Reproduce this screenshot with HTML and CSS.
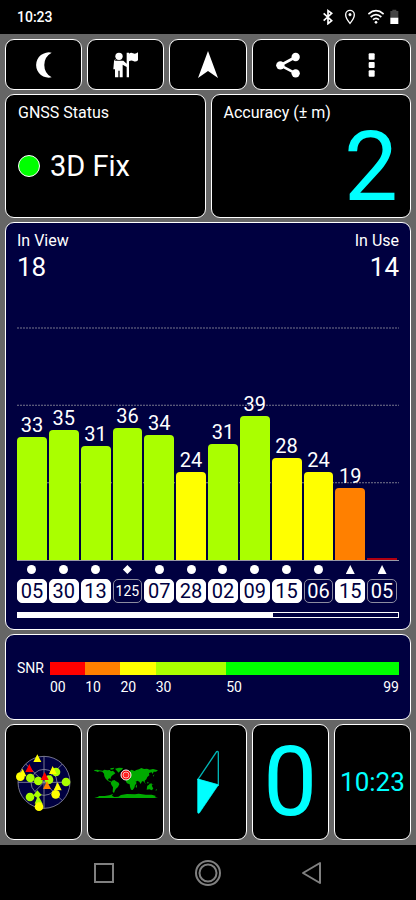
FILE: index.html
```html
<!DOCTYPE html>
<html lang="en">
<head>
<meta charset="utf-8">
<meta name="viewport" content="width=device-width, initial-scale=1">
<title>GNSS Status</title>
<link rel="stylesheet" href="styles.css">
</head>
<body>
<header class="statusbar">
  <span class="clock">10:23</span>
  <span class="sys-icons">
    <svg class="sys" viewBox="337 28 48 48" fill="none" stroke="#fff" stroke-width="5"><path d="M348 41l24 22-11 9V33l11 8-24 22"/></svg>
    <svg class="sys" viewBox="402 28 48 48" fill="none" stroke="#fff" stroke-width="4"><path d="M426 71C417 60 413 53 413 45a13 13 0 0 1 26 0c0 8-4 15-13 26z"/><circle cx="426" cy="45" r="4" fill="#fff" stroke-width="1"/></svg>
    <svg class="sys wifi" viewBox="480 28 48 48" fill="none" stroke="#fff" stroke-width="5"><path d="M481 43q23-20 46 0M488 52q16-14 32 0M495 60q9-8 18 0"/><circle cx="504" cy="68" r="4" fill="#fff" stroke="none"/></svg>
    <svg class="battery" viewBox="545 28 27 48"><path fill="#444" d="M546 34h6v-4h12v4h6v20h-24z"/><path fill="#fff" d="M546 54h24v19h-24z"/></svg>
  </span>
</header>

<main class="board">
  <nav class="row five">
    <button class="card tool" aria-label="Night mode"><svg viewBox="76 140 108 108" fill="#fff"><path d="M153 157a38 38 0 1 0 0 74 42 42 0 0 1 0-74z"/></svg></button>
    <button class="card tool" aria-label="Guide"><svg viewBox="324 140 108 108" fill="#fff"><circle cx="357" cy="168" r="11"/><path d="M344 181h26l10 9v-33h7v3q6-5 12-1 7 4 15-3v24q-7 6-14 2-6-4-13 1v48h-7v-31l-12-7v38h-9v-20h-4v20h-10v-24h-5l2-24q0-6 7-6z"/></svg></button>
    <button class="card tool" aria-label="Navigate"><svg viewBox="190 47 36 36" fill="#fff"><path d="M208 51l10 27-10-7-10 7z"/></svg></button>
    <button class="card tool" aria-label="Share"><svg viewBox="193 140 108 108" fill="#fff"><path d="M264 170l-46 25 46 24" fill="none" stroke="#fff" stroke-width="8"/><circle cx="264" cy="170" r="12.500"/><circle cx="218" cy="195" r="12.500"/><circle cx="264" cy="219" r="12.500"/></svg></button>
    <button class="card tool" aria-label="Menu"><svg viewBox="440 140 108 108" fill="#fff"><rect x="484" y="159" width="18" height="19" rx="3"/><rect x="484" y="185" width="18" height="18" rx="3"/><rect x="484" y="210" width="18" height="19" rx="3"/></svg></button>
  </nav>

  <section class="row two">
    <div class="card status">
      <h2 class="label">GNSS Status</h2>
      <p class="fix"><span class="dot"></span>3D Fix</p>
    </div>
    <div class="card status">
      <h2 class="label">Accuracy (± m)</h2>
      <p class="big accuracy">2</p>
    </div>
  </section>

  <section class="card blue signal">
    <div class="counts">
      <div><h2 class="label">In View</h2><p class="count">18</p></div>
      <div class="right"><h2 class="label">In Use</h2><p class="count">14</p></div>
    </div>
    <div class="plot">
      <svg class="gridlines" aria-hidden="true"><line x1="0" x2="100%" y1="0" y2="0"/><line x1="0" x2="100%" y1="33.3%" y2="33.3%"/><line x1="0" x2="100%" y1="66.7%" y2="66.7%"/></svg>
      <div class="col"><span>33</span><div class="bar lime" style="height:53%"></div></div>
      <div class="col"><span>35</span><div class="bar lime" style="height:56%"></div></div>
      <div class="col"><span>31</span><div class="bar lime" style="height:49%"></div></div>
      <div class="col"><span>36</span><div class="bar lime" style="height:57%"></div></div>
      <div class="col"><span>34</span><div class="bar lime" style="height:54%"></div></div>
      <div class="col"><span>24</span><div class="bar yellow" style="height:38%"></div></div>
      <div class="col"><span>31</span><div class="bar lime" style="height:50%"></div></div>
      <div class="col"><span>39</span><div class="bar lime" style="height:62%"></div></div>
      <div class="col"><span>28</span><div class="bar yellow" style="height:44%"></div></div>
      <div class="col"><span>24</span><div class="bar yellow" style="height:38%"></div></div>
      <div class="col"><span>19</span><div class="bar orange" style="height:31%"></div></div>
      <div class="col"><div class="bar none" style="height:1%"></div></div>
    </div>
    <div class="sats">
      <div class="sat"><i class="mark circle"></i><b class="used">05</b></div>
      <div class="sat"><i class="mark circle"></i><b class="used">30</b></div>
      <div class="sat"><i class="mark circle"></i><b class="used">13</b></div>
      <div class="sat"><i class="mark diamond"></i><b class="small">125</b></div>
      <div class="sat"><i class="mark circle"></i><b class="used">07</b></div>
      <div class="sat"><i class="mark circle"></i><b class="used">28</b></div>
      <div class="sat"><i class="mark circle"></i><b class="used">02</b></div>
      <div class="sat"><i class="mark circle"></i><b class="used">09</b></div>
      <div class="sat"><i class="mark circle"></i><b class="used">15</b></div>
      <div class="sat"><i class="mark circle"></i><b>06</b></div>
      <div class="sat"><i class="mark triangle"></i><b class="used">15</b></div>
      <div class="sat"><i class="mark triangle"></i><b>05</b></div>
    </div>
    <div class="pager"><div class="shown" style="width:67%"></div></div>
  </section>

  <section class="card blue snr">
    <span class="snr-label">SNR</span>
    <div class="scale">
      <div class="red"></div><div class="orange"></div><div class="yellow"></div><div class="lime"></div><div class="green"></div>
      <span>00</span><span>10</span><span>20</span><span>30</span><span class="ends"><span>50</span><span>99</span></span>
    </div>
  </section>

  <section class="row five">
    <button class="card tile" aria-label="Sky view">
      <svg class="sky" viewBox="41 96 180 180">
        <g stroke="#8c8ca0" stroke-width="2.500" fill="none"><circle cx="131" cy="187" r="78" fill="#000040"/><circle cx="131" cy="187" r="39"/><path d="M131 109v156M53 187h156M76 132l28 28M186 132l-28 28M104 214l54-54M158 214l28 28M104 160l54 54"/></g>
        <g fill="#af0"><circle cx="90" cy="174" r="13"/><circle cx="114" cy="183" r="13"/><circle cx="146" cy="179" r="13"/><circle cx="167" cy="156" r="13"/><circle cx="197" cy="186" r="13"/><circle cx="89" cy="231" r="13"/><path d="M111 211l13 14-8 6 11 20h-24l7-18-11-7z"/></g>
        <g fill="#ff0"><circle cx="60" cy="170" r="13"/><circle cx="166" cy="223" r="13"/><circle cx="116" cy="260" r="13"/><path d="M111 103l12 23H99zM67 146l11 23H55zM157 138l12 24h-23zM172 187l12 24h-24z"/></g>
        <path fill="red" d="M87 132l12 24H75zM133 156l12 24h-24z"/><path fill="#ff8000" d="M140 183l12 24h-24z"/>
      </svg>
    </button>
    <button class="card tile" aria-label="World map">
      <svg class="map" viewBox="26 135 198 102">
        <g fill="#0a0">
          <path d="M30 150l9-1 5 2 11 1 5-3 9 2 7-1 4 4 6-2 7 8-6 4-5 4-3 5 1 5-3-3-6 2 2 5 5 1 3 4-4-1-7-4-6-6-4-7-1-8-5-6-8-1-7 2-3-2-6-1z"/>
          <path d="M78 145l12-2-3 5-8 1zM92 146l12-3 12 1-3 5-5 3-5 6-5-5zM83 182l7-2 5 4 8 4 2 5-4 8-6 5-3 5-3 8-4-4 1-13-5-8-2-6z"/>
          <path d="M129 177l9-3 6 3 6 2 7 10-5 7-2 7-5 7-5-1-3-9-1-7-8-3-4-7z"/>
          <path d="M123 168l5-8 7-6 7-5 8 4 6-3 8-2 7-4 8 3 9-1 8 3 10-2 15 4-6 4-7 0-3 7-3-5-8 2 1 7-6 5-3 7-5 4 1 6-5-4-4 0-4 8-4-7-6-3-5 4-6-6-7-1-2-3-8 1z"/>
          <path d="M154 198l3-5 1 8-3 3zM189 197l5-3 3-4 5 3 2 8 3 4-4 6-8-3-8 1 1-7zM178 185l8 6-4-1zM188 185l6 3-4 3zM200 190l8 4-8-1zM215 207l3 2-4 5zM206 167l4-4-2 7z"/>
          <path d="M30 234l10-3 5-3 16 0 14-2 11-4-3 5 7 4 12-1 8-5 18-3 24 1 11-2 21 3 18 0 13 4-4 3 10 3z"/>
        </g>
        <circle cx="125" cy="165" r="15" fill="#e00" stroke="#fff" stroke-width="3"/><circle cx="125" cy="165" r="9" fill="#f22" stroke="#fff" stroke-width="2"/>
      </svg>
    </button>
    <button class="card tile" aria-label="Compass">
      <svg class="compass" viewBox="336 87 72 198" fill="none" stroke="#00b4b4" stroke-width="4"><path d="M342 178l56-83q5-2 5 3v97z"/><path d="M341 177l62 18-57 84q-5 3-5-3z" fill="#0ff" stroke="#0ff" stroke-width="2"/></svg>
    </button>
    <button class="card tile big">0</button>
    <button class="card tile time">10:23</button>
  </section>
</main>

<nav class="navbar">
  <button aria-label="Recents"><svg viewBox="0 0 28 28"><rect x="5" y="5" width="18" height="18"/></svg></button>
  <button aria-label="Home"><svg viewBox="0 0 28 28"><circle cx="14" cy="14" r="12"/><circle cx="14" cy="14" r="8.500"/></svg></button>
  <button aria-label="Back"><svg viewBox="0 0 28 28"><path d="M22 4v20L5 14z" stroke-linejoin="round"/></svg></button>
</nav>
</body>
</html>
```
FILE: styles.css
```css
* { box-sizing: border-box; }

body {
  margin: 0;
  min-height: 100vh;
  display: flex;
  flex-direction: column;
  background: #000;
  color: #fff;
  font-family: Roboto, "Liberation Sans", sans-serif;
}

h2, p { margin: 0; font-weight: 400; }
button { margin: 0; padding: 0; border: 0; background: none; color: inherit; font: inherit; }
svg { display: block; }

.statusbar {
  height: 34px;
  padding: 0 17px;
  display: flex;
  align-items: center;
  justify-content: space-between;
}
.clock { font-size: 14px; font-weight: 500; line-height: 20px; }
.sys-icons { display: flex; gap: 6px; }
.sys { width: 16px; height: 16px; }
.wifi { margin-left: 4px; }
.battery { width: 9px; height: 16px; }

.board {
  flex: 1;
  display: flex;
  flex-direction: column;
  gap: 4px;
  padding: 5px;
  background: #666;
}
.row { display: grid; gap: 5px; }
.five { grid-template-columns: repeat(5, 1fr); }
.two { grid-template-columns: repeat(2, 1fr); }

.card {
  border: 1px solid #fff;
  border-radius: 9px;
  background: #000;
}
.blue { background: #000040; }

.tool {
  height: 51px;
  display: flex;
  align-items: center;
  justify-content: center;
}
.tool svg { width: 36px; height: 36px; }

.status {
  height: 124px;
  padding: 8px 12px;
  display: flex;
  flex-direction: column;
}
.label { font-size: 16px; line-height: 20px; }
.fix {
  flex: 1;
  display: flex;
  align-items: center;
  gap: 10px;
  font-size: 29px;
}
.dot {
  width: 22px;
  height: 22px;
  border: 1px solid #fff;
  border-radius: 50%;
  background: #0f0;
}
.big { font-size: 96px; line-height: 88px; color: #0ff; }
.accuracy { text-align: right; }

.signal {
  flex: 1;
  padding: 8px 11px 11px;
  display: flex;
  flex-direction: column;
}
.counts { display: flex; justify-content: space-between; }
.right { text-align: right; }
.count { font-size: 26px; line-height: 32px; }

.plot {
  position: relative;
  flex: 1;
  min-height: 200px;
  margin-top: 45px;
  padding-right: 2px;
  display: grid;
  grid-template-columns: repeat(12, 1fr);
  gap: 2px;
}
.gridlines {
  position: absolute;
  inset: 0;
  width: 100%;
  height: 100%;
  overflow: visible;
  stroke: #77778c;
  stroke-dasharray: 2 1;
}
.col {
  position: relative;
  display: flex;
  flex-direction: column;
  justify-content: flex-end;
  text-align: center;
  font-size: 20px;
  line-height: 24px;
}
.bar { flex: none; border-radius: 4px 4px 0 0; }
.lime { background: #af0; }
.yellow { background: #ff0; }
.orange { background: #ff8000; }
.red { background: #f00; }
.green { background: #0f0; }
.none { border-radius: 0; background: #b00010; }

.sats {
  border-top: 1px solid #9999a6;
  padding: 4px 2px 0 0;
  display: grid;
  grid-template-columns: repeat(12, 1fr);
  gap: 2px;
}
.sat {
  display: flex;
  flex-direction: column;
  align-items: center;
  gap: 5px;
}
.mark { width: 9px; height: 9px; background: #fff; }
.circle { border-radius: 50%; }
.diamond { clip-path: polygon(50% 0, 100% 50%, 50% 100%, 0 50%); }
.triangle { clip-path: polygon(50% 0, 100% 100%, 0 100%); }
.sat b {
  width: 100%;
  height: 24px;
  border: 1px solid #8c8ca0;
  border-radius: 5px;
  text-align: center;
  font-size: 20px;
  font-weight: 400;
  line-height: 22px;
}
.sat .used { border-color: #fff; background: #fff; color: #000040; }
.sat .small { font-size: 14px; }

.pager {
  height: 6px;
  margin-top: 9px;
  border: 1px solid #fff;
}
.shown { height: 100%; background: #fff; }

.snr {
  height: 86px;
  padding: 27px 11px 0;
  display: flex;
  gap: 6px;
  font-size: 14px;
}
.snr-label { line-height: 13px; }
.scale {
  flex: 1;
  display: grid;
  grid-template-columns: 10fr 10fr 10fr 20fr 49fr;
  grid-template-rows: 13px 24px;
  line-height: 24px;
}
.ends { display: flex; justify-content: space-between; }

.tile {
  height: 116px;
  display: flex;
  align-items: center;
  justify-content: center;
}
.sky { width: 60px; height: 60px; }
.map { width: 66px; height: 34px; }
.compass { width: 24px; height: 66px; }
.time { font-size: 26px; color: #0ff; }

.navbar {
  height: 55px;
  padding: 0 52px;
  display: grid;
  grid-template-columns: repeat(3, 1fr);
}
.navbar button { display: flex; align-items: center; justify-content: center; }
.navbar svg { width: 28px; height: 28px; fill: none; stroke: #808080; stroke-width: 2; }
```
